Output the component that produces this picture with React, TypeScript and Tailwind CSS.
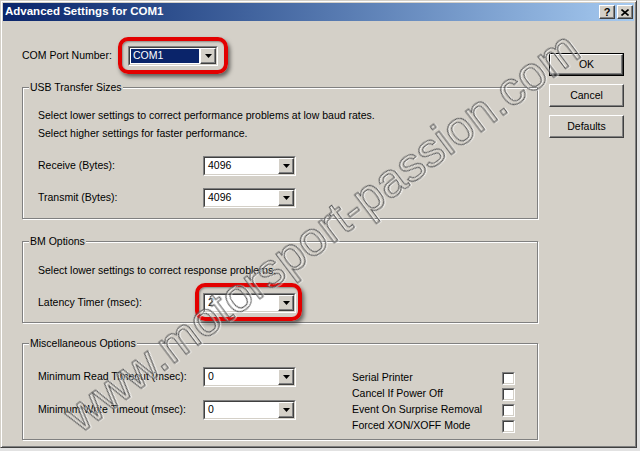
import { ReactNode } from 'react';

// classic 3D bevel styles
const raised =
  'bg-[#d4d0c8] border border-t-white border-l-white border-r-[#404040] border-b-[#404040] shadow-[inset_-1px_-1px_0_#808080]';
const sunkenOuter = 'border border-t-[#808080] border-l-[#808080] border-r-white border-b-white';
const sunkenInner = 'border border-t-[#404040] border-l-[#404040] border-r-[#d4d0c8] border-b-[#d4d0c8]';

const ArrowDown = () => (
  <svg width="7" height="4" viewBox="0 0 7 4">
    <path d="M0 0h7L3.5 4z" fill="#000" />
  </svg>
);

const Combo = ({ value, width = 'w-[93px]', selected = false }: { value: string; width?: string; selected?: boolean }) => (
  <div className={`${width} h-[20px] ${sunkenOuter}`}>
    <div className={`h-full ${sunkenInner} bg-white flex`}>
      <div className="flex-1 flex items-center p-[1px]">
        <span
          className={`flex-1 h-full flex items-center pl-[2px] ${selected ? 'bg-[#0a246a] text-white' : ''}`}
        >
          {value}
        </span>
      </div>
      <div className={`w-[16px] h-full flex items-center justify-center ${raised}`}>
        <ArrowDown />
      </div>
    </div>
  </div>
);

// red marker drawn round a control
const Highlight = ({ className }: { className: string }) => (
  <div
    className={`absolute ${className} border-[4px] border-[#e30000] rounded-[10px] shadow-[2px_3px_4px_rgba(0,0,0,0.55),inset_1px_1px_2px_rgba(0,0,0,0.35)] pointer-events-none`}
  />
);

const Group = ({ title, className, children }: { title: string; className: string; children: ReactNode }) => (
  <fieldset
    className={`${className} border border-[#808080] shadow-[inset_1px_1px_0_#fff,1px_1px_0_#fff]`}
  >
    <legend className="ml-[6px] px-[1px] bg-[#d4d0c8] leading-[13px]">{title}</legend>
    <div className="pl-[15px]">{children}</div>
  </fieldset>
);

const Row = ({ label, value }: { label: string; value: string }) => (
  <div className="flex items-center h-[20px]">
    <span className="w-[165px]">{label}</span>
    <Combo value={value} />
  </div>
);

const Check = ({ label }: { label: string }) => (
  <div className="flex items-center h-[16px]">
    <span className="w-[150px]">{label}</span>
    <div className={`w-[13px] h-[13px] ${sunkenOuter}`}>
      <div className={`w-full h-full ${sunkenInner} bg-white`} />
    </div>
  </div>
);

const Button = ({ label, isDefault = false }: { label: string; isDefault?: boolean }) => (
  <div className={`w-[75px] h-[23px] ${isDefault ? 'border border-black' : ''}`}>
    <div className={`w-full h-full flex items-center justify-center ${raised}`}>{label}</div>
  </div>
);

export default function App() {
  return (
    <div className="w-[640px] h-[451px] bg-[#e2e2e2] relative overflow-hidden font-['Liberation_Sans',Arial,sans-serif] text-[10.5px] text-black">
      <div className="w-[637px] h-[448px] bg-[#d4d0c8] border border-t-[#d4d0c8] border-l-[#d4d0c8] border-r-[#404040] border-b-[#404040] shadow-[inset_1px_1px_0_#fff,inset_-1px_-1px_0_#808080] p-[2px] flex flex-col">
        {/* title bar */}
        <div className="h-[18px] bg-linear-to-r from-[#0a246a] to-[#a6caf0] flex items-center justify-between pl-[2px] pr-[1px]">
          <span className="text-white font-bold text-[11.5px]">Advanced Settings for COM1</span>
          <div className="flex gap-[2px]">
            <div className={`w-[16px] h-[14px] flex items-center justify-center font-bold text-[11px] leading-none ${raised}`}>?</div>
            <div className={`w-[16px] h-[14px] flex items-center justify-center ${raised}`}>
              <svg width="8" height="7" viewBox="0 0 8 7">
                <path d="M0.5 0.5l7 6M7.5 0.5l-7 6" stroke="#000" strokeWidth="1.6" />
              </svg>
            </div>
          </div>
        </div>

        <div className="flex flex-1 pl-[19px]">
          <div className="w-[516px] flex flex-col">
            <div className="mt-[25px] flex items-center h-[20px]">
              <span className="w-[106px]">COM Port Number:</span>
              <div className="relative">
                <Combo value="COM1" width="w-[90px]" selected />
                <Highlight className="-left-[10px] -right-[10px] -top-[9px] -bottom-[8px]" />
              </div>
            </div>

            <Group title="USB Transfer Sizes" className="mt-[15px] h-[138px]">
              <div className="mt-[12px] leading-[18px]">
                <p>Select lower settings to correct performance problems at low baud rates.</p>
                <p>Select higher settings for faster performance.</p>
              </div>
              <div className="mt-[14px] flex flex-col gap-[12px]">
                <Row label="Receive (Bytes):" value="4096" />
                <Row label="Transmit (Bytes):" value="4096" />
              </div>
            </Group>

            <Group title="BM Options" className="mt-[16px] h-[88px]">
              <p className="mt-[13px] leading-[18px]">Select lower settings to correct response problems.</p>
              <div className="mt-[14px] flex items-center h-[20px]">
                <span className="w-[165px]">Latency Timer (msec):</span>
                <div className="relative">
                  <Combo value="2" />
                  <Highlight className="-left-[8px] -right-[6px] -top-[10px] -bottom-[8px]" />
                </div>
              </div>
            </Group>

            <Group title="Miscellaneous Options" className="mt-[14px] h-[103px]">
              <div className="flex">
                <div className="mt-[17px] flex flex-col gap-[13px]">
                  <Row label="Minimum Read Timeout (msec):" value="0" />
                  <Row label="Minimum Write Timeout (msec):" value="0" />
                </div>
                <div className="mt-[20px] ml-[56px] flex flex-col">
                  <Check label="Serial Printer" />
                  <Check label="Cancel If Power Off" />
                  <Check label="Event On Surprise Removal" />
                  <Check label="Forced XON/XOFF Mode" />
                </div>
              </div>
            </Group>
          </div>

          <div className="ml-[11px] mt-[32px] flex flex-col gap-[8px]">
            <Button label="OK" isDefault />
            <Button label="Cancel" />
            <Button label="Defaults" />
          </div>
        </div>
      </div>

      {/* site watermark */}
      <div className="absolute left-[322px] top-[232px] -translate-x-1/2 -translate-y-1/2 -rotate-[37deg] whitespace-nowrap pointer-events-none text-[48px] text-transparent [-webkit-text-stroke:1px_#555] drop-shadow-[1px_1px_0_rgba(255,255,255,0.8)]">
        www.motorsport-passion.com
      </div>
    </div>
  );
}
